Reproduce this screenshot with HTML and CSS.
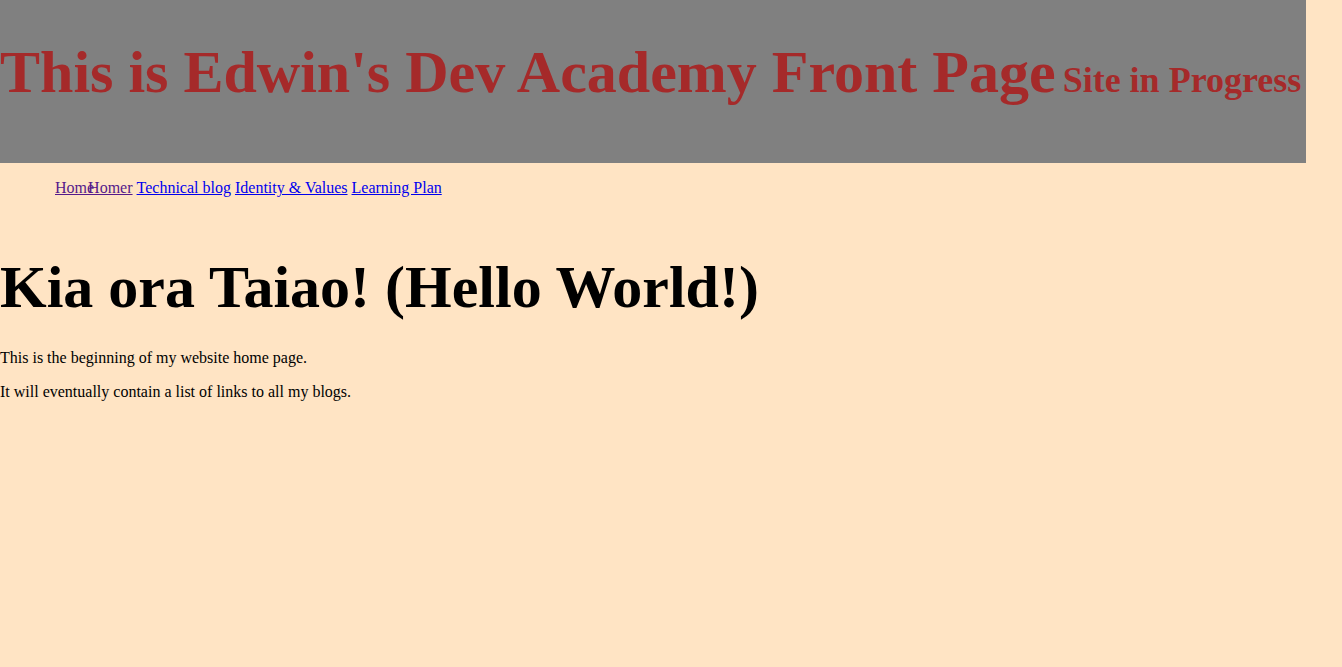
FILE: index.html
```html
<!DOCTYPE html>
<html>
<head>
<meta charset="utf-8">
<link rel="stylesheet" href="styles.css">
</head>
<body>
<header class="masthead">
  <h1 class="site-title">This is Edwin's Dev Academy Front Page</h1>
  <span class="site-status">Site in Progress</span>
</header>
<nav class="main-nav">
  <a class="nav-link visited" href="#">Home</a>
  <a class="nav-link visited overlap" href="#">Homer</a>
  <a class="nav-link" href="#">Technical blog</a>
  <a class="nav-link" href="#">Identity &amp; Values</a>
  <a class="nav-link" href="#">Learning Plan</a>
</nav>
<main class="content">
  <h1 class="greeting">Kia ora Taiao! (Hello World!)</h1>
  <p class="para">This is the beginning of my website home page.</p>
  <p class="para">It will eventually contain a list of links to all my blogs.</p>
</main>
</body>
</html>
```
FILE: styles.css
```css
html, body {
  margin: 0;
  padding: 0;
}
body {
  background: #ffe4c4;
  font-family: "Liberation Serif", "Times New Roman", serif;
  font-size: 16px;
  color: #000;
  height: 667px;
}
.masthead {
  width: 1306px;
  height: 163px;
  box-sizing: border-box;
  background: #808080;
  color: #a52a2a;
  display: flex;
  align-items: baseline;
  gap: 7px;
  padding-top: 38px;
  white-space: nowrap;
}
.site-title {
  margin: 0;
  font-size: 60px;
  font-weight: bold;
  line-height: 69px;
  flex-shrink: 0;
}
.site-status {
  font-size: 36px;
  font-weight: bold;
  flex-shrink: 0;
}
.main-nav {
  display: flex;
  gap: 4px;
  padding: 16px 0 0 55px;
  line-height: 18px;
}
.nav-link {
  color: #0000ee;
  text-decoration: underline;
}
.nav-link.visited {
  color: #551a8b;
}
.nav-link.overlap {
  margin-left: -10px;
}
.content {
  padding-top: 56px;
}
.greeting {
  margin: 0;
  font-size: 60px;
  font-weight: bold;
  line-height: 69px;
}
.para {
  margin: 0 0 16px 0;
  line-height: 18px;
}
.greeting + .para {
  margin-top: 27px;
}
```
